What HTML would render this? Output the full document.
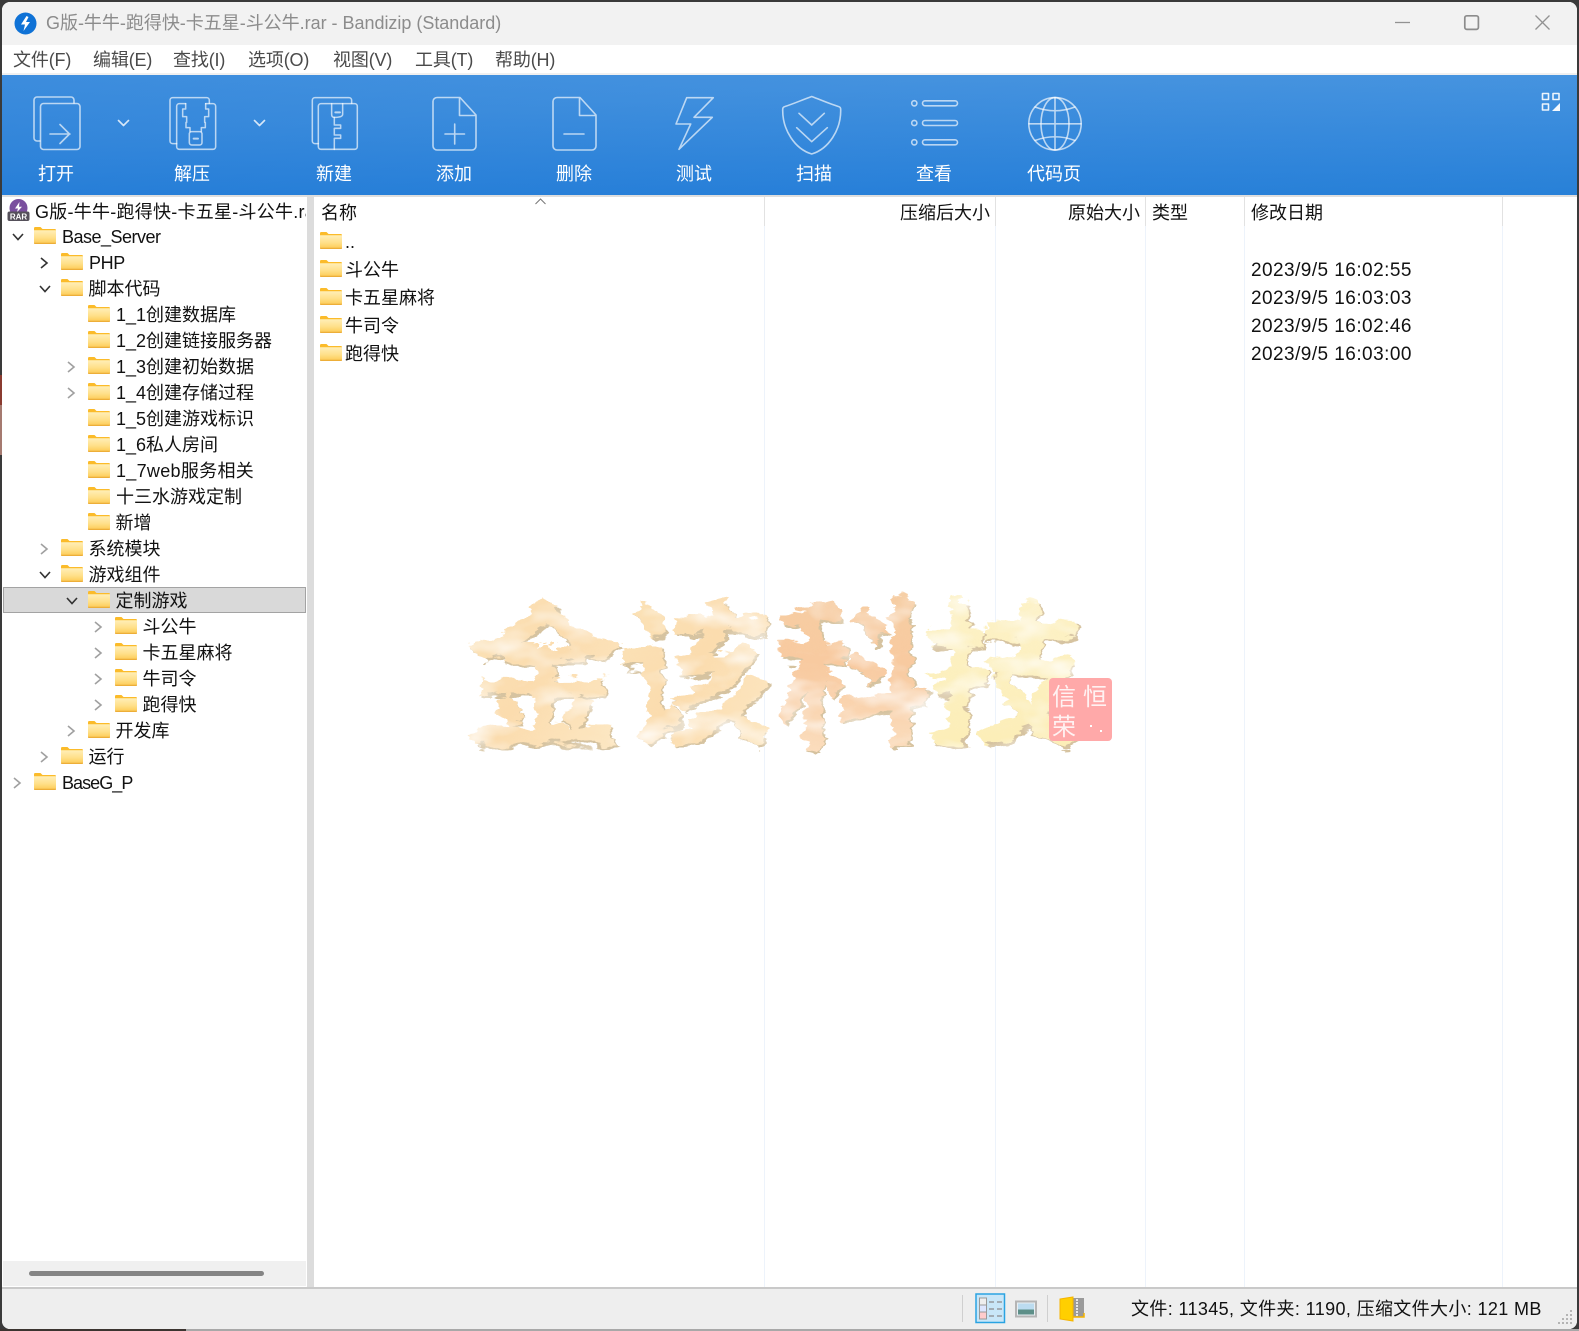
<!DOCTYPE html>
<html lang="zh"><head><meta charset="utf-8"><title>Bandizip</title>
<style>
*{box-sizing:border-box;margin:0;padding:0}
html,body{width:1579px;height:1331px;overflow:hidden;background:#3a3a3a;font-family:"Liberation Sans","Noto Sans CJK SC",sans-serif;font-size:18px;color:#111}
.a{position:absolute;white-space:nowrap}
#win{position:absolute;left:2px;top:2px;width:1575px;height:1327px;background:#fff;border-radius:8px;overflow:hidden}
#page{position:absolute;left:0;top:0;width:1579px;height:1331px}
.m{top:46px;height:28px;line-height:28px;color:#4a4a4a;letter-spacing:-.15px}
.t{top:162px;height:24px;line-height:24px;color:#fff;text-align:center;width:80px}
.r{height:26px;line-height:26px}
.l{height:28px;line-height:28px}
.d{left:1251px;font-size:19px;letter-spacing:.45px}
.h{top:199px;height:28px;line-height:28px}
.sep{position:absolute;width:1px;top:197px;height:1090px;background:linear-gradient(#e2e2e2 0,#e2e2e2 29px,#edf3fb 29px,#edf3fb 100%)}
</style></head><body>
<div id="page">
<div class="a" style="left:0;top:375px;width:2px;height:30px;background:#8a3b30"></div>
<div class="a" style="left:0;top:405px;width:2px;height:50px;background:#a57a70"></div>
<div class="a" style="left:0;top:1329px;width:186px;height:2px;background:#3b3430"></div>
<div class="a" style="left:186px;top:1329px;width:1393px;height:2px;background:#a8a8a8"></div>
</div>

<div id="win"></div>
<div class="a" style="left:2px;top:2px;width:1575px;height:43px;background:#f2f2f2;border-radius:8px 8px 0 0"></div>
<div class="a" style="left:2px;top:45px;width:1575px;height:28px;background:#fff"></div>
<div class="a" style="left:2px;top:73px;width:1575px;height:2px;background:#f0f0f0"></div>

<!-- title icon -->
<svg class="a" style="left:14px;top:12px" width="23" height="23" viewBox="0 0 23 23"><circle cx="11.5" cy="11.5" r="11" fill="#0f72d6"/><path d="M12.5 4 L7 12.5 H11 L9.5 19 L16 10 H12 L14.5 5 Z" fill="#fff"/></svg>
<div class="a" style="left:46px;top:10px;height:26px;line-height:26px;color:#8c8c8c;letter-spacing:-.02px">G版-牛牛-跑得快-卡五星-斗公牛.rar - Bandizip (Standard)</div>
<!-- window buttons -->
<svg class="a" style="left:1380px;top:5px" width="190" height="36" fill="none" stroke="#929292" stroke-width="1.3"><path d="M15 17.5H30"/><rect x="84.8" y="10.8" width="13.6" height="13.6" rx="2" stroke-width="1.7" stroke="#8c8c8c"/><path d="M155.5 10.5L169.5 24.5M169.5 10.5L155.5 24.5"/></svg>
<!-- menu -->
<div class="a m" style="left:13px">文件(F)</div>
<div class="a m" style="left:93px">编辑(E)</div>
<div class="a m" style="left:173px">查找(I)</div>
<div class="a m" style="left:248px">选项(O)</div>
<div class="a m" style="left:333px">视图(V)</div>
<div class="a m" style="left:415px">工具(T)</div>
<div class="a m" style="left:495px">帮助(H)</div>

<!-- toolbar -->
<div class="a" style="left:2px;top:75px;width:1575px;height:120px;background:linear-gradient(176deg,#4a98e2 0%,#3d8fde 30%,#1f7cd8 75%,#0f72d3 100%)"></div>
<div class="a" style="left:2px;top:75px;width:1575px;height:120px;background:linear-gradient(90deg,rgba(0,90,200,.18),rgba(255,255,255,.10))"></div>
<svg class="a" style="left:0;top:75px;overflow:visible" width="1579" height="120" viewBox="0 75 1579 120" fill="none" stroke="#fff" stroke-opacity=".66" stroke-width="1.6" stroke-linejoin="round" stroke-linecap="round">
 <!-- open -->
 <path d="M40 141H37a3 3 0 0 1-3-3V100a3 3 0 0 1 3-3H71a3 3 0 0 1 3 3v3"/>
 <rect x="40.5" y="103.5" width="39.5" height="46" rx="3"/>
 <path d="M50 134H70M60 124.5L69.5 134L60 143.5"/>
 <path d="M118.5 120.5L123.5 125.5L128.5 120.5M254.5 120.5L259.5 125.5L264.5 120.5" stroke-opacity=".8"/>
 <!-- extract -->
 <g transform="translate(150 85) scale(.3333)" stroke-width="4.6">
  <path d="M80 176H68a8 8 0 0 1-8-8V46a8 8 0 0 1 8-8H170a8 8 0 0 1 8 8v9"/>
  <path d="M107 56H88a8 8 0 0 0-8 8V185a8 8 0 0 0 8 8H189a8 8 0 0 0 8-8V64a8 8 0 0 0-8-8H167"/>
  <path d="M107 56V72H98V95H110V112H108V128H120V140M167 56V72H176V95H164V112H166V128H154V140"/>
  <rect x="118" y="140" width="38" height="40" rx="7"/>
  <path d="M131 161H144" stroke-width="6"/>
 </g>
 <!-- new -->
 <g transform="translate(150 85) scale(.3333)" stroke-width="4.6">
  <path d="M505 176H495a8 8 0 0 1-8-8V46a8 8 0 0 1 8-8H597a8 8 0 0 1 8 8v9"/>
  <rect x="505" y="56" width="117" height="137" rx="8"/>
  <path d="M545 56V88Q545 97 553 97Q578 97 578 88V56"/>
  <path d="M556 82H570" stroke-width="6"/>
  <path d="M553 97V120H572V130H553V150H572V160H553V193"/>
 </g>
 <!-- add -->
 <path d="M437 97.5H460L476 115V146a4 4 0 0 1-4 4H437a4 4 0 0 1-4-4V101.5a4 4 0 0 1 4-4ZM459.5 98V115.5H476"/>
 <path d="M445 134H464.5M454.7 124V144"/>
 <!-- delete -->
 <path d="M557 97.5H580L596 115V146a4 4 0 0 1-4 4H557a4 4 0 0 1-4-4V101.5a4 4 0 0 1 4-4ZM579.5 98V115.5H596"/>
 <path d="M564 134H584"/>
 <!-- test -->
 <path d="M686.7 97.7H713.3L694 117.3H712.3L679 149.3L690.7 124H676Z"/>
 <!-- scan -->
 <path d="M811.7 96.5C802 100 793 104 785 106.5C783 107 782.7 108 782.7 110C782.5 130 795 149 811.7 154C828.5 149 841 130 840.7 110C840.7 108 840.4 107 838.4 106.5C830 104 821 100 811.7 96.5Z"/>
 <path d="M799 113.3L811.7 125L824.3 113.3M796.7 127.7L811.7 141.7L827.3 127.7"/>
 <!-- view -->
 <circle cx="914.3" cy="103.3" r="2.6"/><circle cx="914.3" cy="123" r="2.6"/><circle cx="914.3" cy="142.3" r="2.6"/>
 <rect x="922.5" y="100.8" width="35" height="5" rx="2.5"/><rect x="922.5" y="120.5" width="35" height="5" rx="2.5"/><rect x="922.5" y="139.8" width="35" height="5" rx="2.5"/>
 <!-- globe -->
 <circle cx="1055" cy="123.8" r="26.2"/><ellipse cx="1055" cy="123.8" rx="14" ry="26.2"/>
 <path d="M1055 97.5V150M1029 123.8H1081M1035 107Q1055 114.5 1075 107M1035 140.5Q1055 133 1075 140.5"/>
 <!-- layout -->
 <g stroke-opacity=".9" stroke-width="1.6" stroke-linecap="butt"><rect x="1542.5" y="93.5" width="6" height="6"/><rect x="1553" y="93.5" width="6" height="6"/><rect x="1542.5" y="104" width="6" height="6"/></g>
 <path d="M1560 103V111H1552Z" fill="#fff" fill-opacity=".95" stroke="none"/>
</svg>
<div class="a t" style="left:16px">打开</div>
<div class="a t" style="left:152px">解压</div>
<div class="a t" style="left:294px">新建</div>
<div class="a t" style="left:414px">添加</div>
<div class="a t" style="left:534px">删除</div>
<div class="a t" style="left:654px">测试</div>
<div class="a t" style="left:774px">扫描</div>
<div class="a t" style="left:894px">查看</div>
<div class="a t" style="left:1014px">代码页</div>

<!-- top hairline and splitter -->
<div class="a" style="left:2px;top:195px;width:1575px;height:2px;background:#dedede"></div>
<div class="a" style="left:307px;top:195px;width:7px;height:1093px;background:#dcdcdc"></div>

<svg width="0" height="0" style="position:absolute"><defs>
<linearGradient id="fg" x1="0" y1="0" x2="0" y2="1"><stop offset="0" stop-color="#ffefb8"/><stop offset=".55" stop-color="#ffe08a"/><stop offset="1" stop-color="#fdcb55"/></linearGradient>
<symbol id="f" viewBox="0 0 22 17"><path d="M0 1.2Q0 0 1.2 0H6.5L8.5 2H20.8Q22 2 22 3.2V15.8Q22 17 20.8 17H1.2Q0 17 0 15.8Z" fill="#fbbb2a"/><path d="M0 3.2H22V15.8Q22 16.6 20.8 16.6H1.2Q0 16.6 0 15.8Z" fill="url(#fg)"/><path d="M0 16.2H22" stroke="#e8a93a" stroke-width="1"/></symbol>
<symbol id="cr" viewBox="0 0 12 14"><path d="M3 2L9 7L3 12" fill="none" stroke="currentColor" stroke-width="1.6"/></symbol>
<symbol id="cd" viewBox="0 0 14 12"><path d="M2 3L7 8.5L12 3" fill="none" stroke="currentColor" stroke-width="1.6"/></symbol>
</defs></svg>

<!-- tree -->
<div class="a" style="left:3px;top:197px;width:304px;height:1064px;overflow:hidden">
<div class="a" style="left:0;top:389.5px;width:303px;height:26px;background:#d9d9d9;border:1px solid #a3a3a3"></div>
</div>
<svg class="a" style="left:7px;top:199px" width="23" height="23" viewBox="0 0 23 23"><circle cx="11.5" cy="9" r="9" fill="#7a4f9e"/><path d="M12.5 3L8 9.5H11L9.8 13.5L15 7.8H12Z" fill="#fff"/><rect x="0.5" y="12.5" width="22" height="9.5" rx="2" fill="#55505a"/><text x="11.5" y="20.5" text-anchor="middle" font-size="8" font-family="Liberation Sans" font-weight="bold" fill="#fff">RAR</text></svg>
<div class="a r" style="left:35px;top:199px;width:271px;overflow:hidden;letter-spacing:.25px">G版-牛牛-跑得快-卡五星-斗公牛.rar</div>

<svg class="a" style="left:0;top:197px;color:#333" width="307" height="600" viewBox="0 197 307 600">
 <g color="#333"><use href="#cd" x="11" y="231" width="14" height="12"/><use href="#cr" x="38" y="256" width="12" height="14"/><use href="#cd" x="38" y="283" width="14" height="12"/><use href="#cd" x="38" y="569" width="14" height="12"/><use href="#cd" x="65" y="595" width="14" height="12"/></g>
 <g color="#a0a0a0"><use href="#cr" x="65" y="360" width="12" height="14"/><use href="#cr" x="65" y="386" width="12" height="14"/><use href="#cr" x="38" y="542" width="12" height="14"/><use href="#cr" x="92" y="620" width="12" height="14"/><use href="#cr" x="92" y="646" width="12" height="14"/><use href="#cr" x="92" y="672" width="12" height="14"/><use href="#cr" x="92" y="698" width="12" height="14"/><use href="#cr" x="65" y="724" width="12" height="14"/><use href="#cr" x="38" y="750" width="12" height="14"/><use href="#cr" x="11" y="776" width="12" height="14"/></g>
 <use href="#f" x="34" y="227" width="22" height="17"/><use href="#f" x="61" y="253" width="22" height="17"/><use href="#f" x="61" y="279" width="22" height="17"/>
 <use href="#f" x="88" y="305" width="22" height="17"/><use href="#f" x="88" y="331" width="22" height="17"/><use href="#f" x="88" y="357" width="22" height="17"/><use href="#f" x="88" y="383" width="22" height="17"/><use href="#f" x="88" y="409" width="22" height="17"/><use href="#f" x="88" y="435" width="22" height="17"/><use href="#f" x="88" y="461" width="22" height="17"/><use href="#f" x="88" y="487" width="22" height="17"/><use href="#f" x="88" y="513" width="22" height="17"/>
 <use href="#f" x="61" y="539" width="22" height="17"/><use href="#f" x="61" y="565" width="22" height="17"/><use href="#f" x="88" y="591" width="22" height="17"/>
 <use href="#f" x="115" y="617" width="22" height="17"/><use href="#f" x="115" y="643" width="22" height="17"/><use href="#f" x="115" y="669" width="22" height="17"/><use href="#f" x="115" y="695" width="22" height="17"/>
 <use href="#f" x="88" y="721" width="22" height="17"/><use href="#f" x="61" y="747" width="22" height="17"/><use href="#f" x="34" y="773" width="22" height="17"/>
</svg>

<div class="a r" style="left:62px;top:224px;letter-spacing:-.5px">Base_Server</div>
<div class="a r" style="left:89px;top:250px;letter-spacing:-.4px">PHP</div>
<div class="a r" style="left:88.5px;top:276px">脚本代码</div>
<div class="a r" style="left:116px;top:302px">1_1创建数据库</div>
<div class="a r" style="left:116px;top:328px">1_2创建链接服务器</div>
<div class="a r" style="left:116px;top:354px">1_3创建初始数据</div>
<div class="a r" style="left:116px;top:380px">1_4创建存储过程</div>
<div class="a r" style="left:116px;top:406px">1_5创建游戏标识</div>
<div class="a r" style="left:116px;top:432px">1_6私人房间</div>
<div class="a r" style="left:116px;top:458px;letter-spacing:.3px">1_7web服务相关</div>
<div class="a r" style="left:116px;top:484px">十三水游戏定制</div>
<div class="a r" style="left:115.5px;top:510px">新增</div>
<div class="a r" style="left:88.5px;top:536px">系统模块</div>
<div class="a r" style="left:88.5px;top:562px">游戏组件</div>
<div class="a r" style="left:115.5px;top:588px">定制游戏</div>
<div class="a r" style="left:142.5px;top:614px">斗公牛</div>
<div class="a r" style="left:142.5px;top:640px">卡五星麻将</div>
<div class="a r" style="left:142.5px;top:666px">牛司令</div>
<div class="a r" style="left:142.5px;top:692px">跑得快</div>
<div class="a r" style="left:115.5px;top:718px">开发库</div>
<div class="a r" style="left:88.5px;top:744px">运行</div>
<div class="a r" style="left:62px;top:770px;letter-spacing:-.95px">BaseG_P</div>

<!-- tree scrollbar -->
<div class="a" style="left:3px;top:1261px;width:303px;height:25px;background:#f0f0f0"></div>
<div class="a" style="left:29px;top:1271px;width:235px;height:5px;background:#858585;border-radius:3px"></div>

<!-- list -->
<div class="sep" style="left:764px"></div>
<div class="sep" style="left:995px"></div>
<div class="sep" style="left:1145px"></div>
<div class="sep" style="left:1244px"></div>
<div class="sep" style="left:1502px"></div>
<div class="a h" style="left:321px">名称</div>
<svg class="a" style="left:534px;top:197px" width="13" height="8" fill="none" stroke="#777" stroke-width="1"><path d="M1.5 7L6.5 2L11.5 7"/></svg>
<div class="a h" style="left:900px">压缩后大小</div>
<div class="a h" style="left:1068px">原始大小</div>
<div class="a h" style="left:1152px">类型</div>
<div class="a h" style="left:1251px">修改日期</div>

<svg class="a" style="left:320px;top:230px" width="24" height="135" viewBox="0 0 24 135"><use href="#f" x="0" y="2" width="22" height="17"/><use href="#f" x="0" y="30" width="22" height="17"/><use href="#f" x="0" y="58" width="22" height="17"/><use href="#f" x="0" y="86" width="22" height="17"/><use href="#f" x="0" y="114" width="22" height="17"/></svg>
<div class="a l" style="left:345px;top:228px">..</div>
<div class="a l" style="left:345px;top:256px">斗公牛</div>
<div class="a l" style="left:345px;top:284px">卡五星麻将</div>
<div class="a l" style="left:345px;top:312px">牛司令</div>
<div class="a l" style="left:345px;top:340px">跑得快</div>
<div class="a l d" style="top:257px">2023/9/5 16:02:55</div>
<div class="a l d" style="top:285px">2023/9/5 16:03:03</div>
<div class="a l d" style="top:313px">2023/9/5 16:02:46</div>
<div class="a l d" style="top:341px">2023/9/5 16:03:00</div>

<!-- watermark -->
<svg class="a" style="left:460px;top:570px" width="670" height="190" viewBox="460 570 670 190">
 <defs>
  <filter id="rough" x="-5%" y="-5%" width="110%" height="110%" color-interpolation-filters="sRGB">
   <feTurbulence type="fractalNoise" baseFrequency=".035 .09" numOctaves="4" seed="4" result="n1"/>
   <feDisplacementMap in="SourceGraphic" in2="n1" scale="20" xChannelSelector="R" yChannelSelector="G" result="d"/>
   <feTurbulence type="fractalNoise" baseFrequency=".018 .035" numOctaves="3" seed="9" result="n2"/>
   <feColorMatrix in="n2" type="matrix" values="0 0 0 0 1 0 0 0 0 1 0 0 0 0 1 1.8 0 0 0 -.82" result="w"/>
   <feComposite in="w" in2="d" operator="in" result="m"/>
   <feMerge><feMergeNode in="d"/><feMergeNode in="m"/></feMerge>
  </filter>
  <linearGradient id="w1" x1="0" y1="0" x2="1" y2="1"><stop offset="0" stop-color="#fbe4ba"/><stop offset=".5" stop-color="#fbdcae"/><stop offset="1" stop-color="#fdeac8"/></linearGradient>
  <linearGradient id="w2" x1="0" y1="0" x2="0" y2="1"><stop offset="0" stop-color="#f5cfa4"/><stop offset=".5" stop-color="#f8caa0"/><stop offset="1" stop-color="#fce4c8"/></linearGradient>
  <linearGradient id="w3" x1="0" y1="0" x2="0" y2="1"><stop offset="0" stop-color="#fdf3cc"/><stop offset="1" stop-color="#fcedb4"/></linearGradient>
 </defs>
 <g filter="url(#rough)" font-family="Noto Sans CJK SC,Noto Serif CJK SC,sans-serif" font-weight="700" font-size="158">
  <g fill="#d6c3a0" transform="translate(2 3)"><text x="465" y="733">金</text><text x="617" y="733">该</text><text x="775" y="733">科</text><text x="925" y="733">技</text></g>
  <text x="465" y="733" fill="url(#w1)">金</text><text x="617" y="733" fill="url(#w1)">该</text><text x="775" y="733" fill="url(#w2)">科</text><text x="925" y="733" fill="url(#w3)">技</text>
 </g>
 <rect x="1049" y="678" width="63" height="63" rx="4" fill="#ffa9a9"/>
 <g fill="#fff" font-family="Noto Sans CJK SC,sans-serif" font-size="24" fill-opacity=".85"><text x="1052" y="705">信</text><text x="1052" y="735">荣</text><text x="1083" y="705">恒</text></g>
 <path d="M1090 725h2v2h-2zM1100 730h2v2h-2z" fill="#fff"/>
</svg>

<!-- status bar -->
<div class="a" style="left:2px;top:1287px;width:1575px;height:2px;background:#c9c9c9"></div>
<div class="a" style="left:2px;top:1289px;width:1575px;height:40px;background:#eeeeee;border-radius:0 0 8px 8px"></div>
<div class="a" style="left:962px;top:1295px;width:1px;height:27px;background:#cfcfcf"></div>
<div class="a" style="left:1047px;top:1295px;width:1px;height:27px;background:#cfcfcf"></div>
<svg class="a" style="left:975px;top:1293px" width="112" height="32" viewBox="0 0 112 32">
 <rect x="1" y="1" width="28.5" height="28.5" fill="#c8e6f8" stroke="#2aa3e2" stroke-width="1.5"/>
 <rect x="4.5" y="5" width="7" height="7" fill="#eee" stroke="#999"/><rect x="4.5" y="12" width="7" height="7" fill="#dde6ff" stroke="#999"/><rect x="4.5" y="19" width="7" height="7" fill="#fcc" stroke="#999"/>
 <path d="M14 9H19M22 9H27M14 16H19M22 16H27M14 23H19M22 23H27" stroke="#8a8a8a" stroke-width="1.3"/>
 <rect x="41" y="8.5" width="20" height="15" fill="#e8eef2" stroke="#b5b5b5" stroke-width="2"/><rect x="43" y="10.5" width="16" height="6" fill="#bcdcf0"/><rect x="43" y="16.5" width="16" height="5" fill="#5d8f88"/>
 <rect x="95" y="5" width="14" height="19" fill="#9a9a9a"/><path d="M102 6V24" stroke="#e6e6e6" stroke-width="2" stroke-dasharray="2 1"/>
 <path d="M85 6L98 4V28L85 26Z" fill="#ffcf00" stroke="#f5b400"/><path d="M98 24H109V20" fill="none" stroke="#f5b400" stroke-width="1.5"/>
</svg>
<div class="a" style="left:1131px;top:1296px;height:26px;line-height:26px;letter-spacing:.37px">文件: 11345, 文件夹: 1190, 压缩文件大小: 121 MB</div>
<svg class="a" style="left:1558px;top:1308px" width="16" height="16" fill="#b4b4b4"><rect x="12" y="2" width="2" height="2"/><rect x="8" y="6" width="2" height="2"/><rect x="12" y="6" width="2" height="2"/><rect x="4" y="10" width="2" height="2"/><rect x="8" y="10" width="2" height="2"/><rect x="12" y="10" width="2" height="2"/><rect x="0" y="14" width="2" height="2"/><rect x="4" y="14" width="2" height="2"/><rect x="8" y="14" width="2" height="2"/><rect x="12" y="14" width="2" height="2"/></svg>
</body></html>
